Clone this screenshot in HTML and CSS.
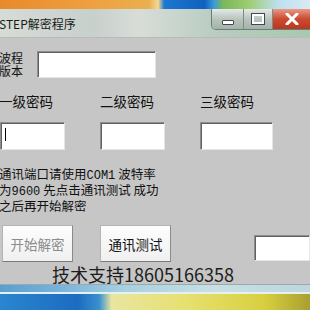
FILE: index.html
```html
<!DOCTYPE html>
<html lang="zh-CN">
<head>
    <meta charset="UTF-8">
    <title>STEP解密程序</title>
    <link rel="stylesheet" href="styles.css">
</head>
<body>
    <div class="desk-top"></div>
    <div class="window">
        <div class="titlebar">
            <span class="title">STEP解密程序</span>
            <div class="caption-btns">
                <div class="cap-btn cap-min"><span class="min-glyph"></span></div>
                <div class="cap-btn cap-max"><span class="max-glyph"></span></div>
                <div class="cap-btn cap-close">
                    <svg width="14" height="12" viewBox="0 0 14 12">
                        <path d="M2 1 L12 11 M12 1 L2 11" stroke="#fff" stroke-width="3" stroke-linecap="round"/>
                    </svg>
                </div>
            </div>
        </div>

        <div class="content">
            <div class="version-row">
                <div class="version-label">波程<br>版本</div>
                <div class="field field-wide"></div>
            </div>

            <div class="pw-grid">
                <div class="pw-label pw-first">一级密码</div>
                <div class="pw-label">二级密码</div>
                <div class="pw-label">三级密码</div>
                <div class="field field-pw"><span class="caret"></span></div>
                <div class="field field-pw"></div>
                <div class="field field-pw3"></div>
            </div>

            <p class="hint">通讯端口请使用<span class="mono">COM1</span> 波特率<br>为<span class="mono">9600</span> 先点击通讯测试 成功<br>之后再开始解密</p>

            <div class="btn-row">
                <button class="btn btn-disabled">开始解密</button>
                <button class="btn">通讯测试</button>
                <div class="field field-status"></div>
            </div>

            <div class="support">技术支持18605166358</div>
        </div>
        <div class="frame-bottom"></div>
    </div>
    <div class="desk-bottom"></div>
</body>
</html>
```

FILE: styles.css
```css
body {
    margin: 0;
    width: 310px;
    height: 310px;
    overflow: hidden;
    display: flex;
    flex-direction: column;
    font-family: "Noto Sans CJK SC", "Noto Sans", sans-serif;
    color: #111;
}

.desk-top {
    height: 10px;
    background: linear-gradient(to right, #e88a2c 0%, #f0a040 30%, #e8b050 48%, #f6d890 51%, #1a78d0 53%, #1060c0 66%, #3a9ad8 69%, #7ab85a 72%, #9ccc70 80%, #bfe0f0 90%, #d8eaf4 100%);
}

.window {
    flex: 1;
    display: flex;
    flex-direction: column;
}

.titlebar {
    height: 28px;
    display: flex;
    align-items: flex-start;
    justify-content: space-between;
    background: linear-gradient(to right, #d6dcd6 0%, #c8d0cc 30%, #d8ddd8 45%, #b8ccc0 70%, #a8c8b0 100%);
    border-bottom: 1px solid #b6bcb6;
}

.title {
    font-size: 12px;
    line-height: 14px;
    margin: 8px 0 0 -1px;
    color: #1a1a1a;
    white-space: nowrap;
}

.caption-btns {
    display: flex;
    height: 20px;
    border: 1px solid #6e7c78;
    border-top: none;
    border-radius: 0 0 0 5px;
    overflow: hidden;
    margin-right: -2px;
}

.cap-btn {
    display: flex;
    align-items: center;
    justify-content: center;
}

.cap-min {
    width: 31px;
    background: linear-gradient(#e4eae6, #b8c4bc 50%, #a4b4aa);
    border-right: 1px solid #7e8c86;
}

.cap-max {
    width: 28px;
    background: linear-gradient(#e4eae6, #b8c4bc 50%, #a4b4aa);
    border-right: 1px solid #7e8c86;
}

.cap-close {
    width: 38px;
    background: linear-gradient(#e89a88, #cc4a30 50%, #b83820);
}

.min-glyph {
    width: 10px;
    height: 3px;
    margin-top: 6px;
    background: #fff;
    border: 1px solid #445;
    border-radius: 1px;
}

.max-glyph {
    width: 8px;
    height: 6px;
    border: 2px solid #fff;
    outline: 1px solid #445;
}

.content {
    flex: 1;
    background: #c6c6c6;
    padding: 13px 0 0;
    display: flex;
    flex-direction: column;
}

.version-row {
    display: flex;
    align-items: flex-start;
    gap: 13px;
}

.version-label {
    font-size: 12px;
    line-height: 13px;
    margin: 0 0 0 -1px;
    width: 25px;
}

.field {
    background: #fff;
    border: 1px solid #8e8e8e;
    border-right-color: #e6e6e6;
    border-bottom-color: #e6e6e6;
    box-shadow: inset 1px 1px 0 #606060;
    box-sizing: border-box;
}

.field-wide {
    width: 119px;
    height: 27px;
}

.pw-grid {
    display: grid;
    grid-template-columns: 100px 100px 1fr;
    row-gap: 12px;
    margin-top: 15px;
}

.pw-label {
    font-size: 13.5px;
    line-height: 17px;
}

.pw-first {
    margin-left: -1px;
}

.field-pw {
    width: 65px;
    height: 28px;
    position: relative;
}

.field-pw3 {
    width: 73px;
    height: 28px;
}

.caret {
    position: absolute;
    left: 4px;
    top: 5px;
    width: 1px;
    height: 13px;
    background: #000;
}

.hint {
    margin: 17px 0 0 -1px;
    font-size: 12.5px;
    line-height: 14px;
}

.mono {
    font-family: "Liberation Mono", monospace;
    font-size: 12px;
}

.btn-row {
    display: flex;
    align-items: flex-start;
    margin-top: 12px;
}

.btn {
    width: 71px;
    height: 37px;
    margin-left: 2px;
    background: linear-gradient(#fdfdfd, #f0f0f0);
    border: 1px solid #b4b4b4;
    border-right-color: #8a8a8a;
    border-bottom-color: #7a7a7a;
    font-family: inherit;
    font-size: 13.5px;
    color: #111;
    padding: 0;
}

.btn + .btn {
    margin-left: 27px;
}

.btn-disabled {
    color: #8c8c8c;
}

.field-status {
    width: 56px;
    height: 26px;
    margin: 10px 0 0 auto;
}

.support {
    font-size: 18px;
    line-height: 20px;
    margin: 2px 0 0 52px;
    color: #1c1c1c;
}

.frame-bottom {
    height: 9px;
    background: linear-gradient(to right, #5a9ed0 0%, #78b4dc 20%, #a8d0e0 40%, #c8e0e4 70%, #bcd6dc 100%);
    border-top: 1px solid #9aa8b0;
    box-shadow: inset 0 -2px 0 #e6f0f2;
}

.desk-bottom {
    height: 17px;
    background: linear-gradient(to right, #2a86d0 0%, #1c6cc0 25%, #3a90d0 32%, #e8e6a0 36%, #e6e070 60%, #d8d040 85%, #a8a030 100%);
}
```
